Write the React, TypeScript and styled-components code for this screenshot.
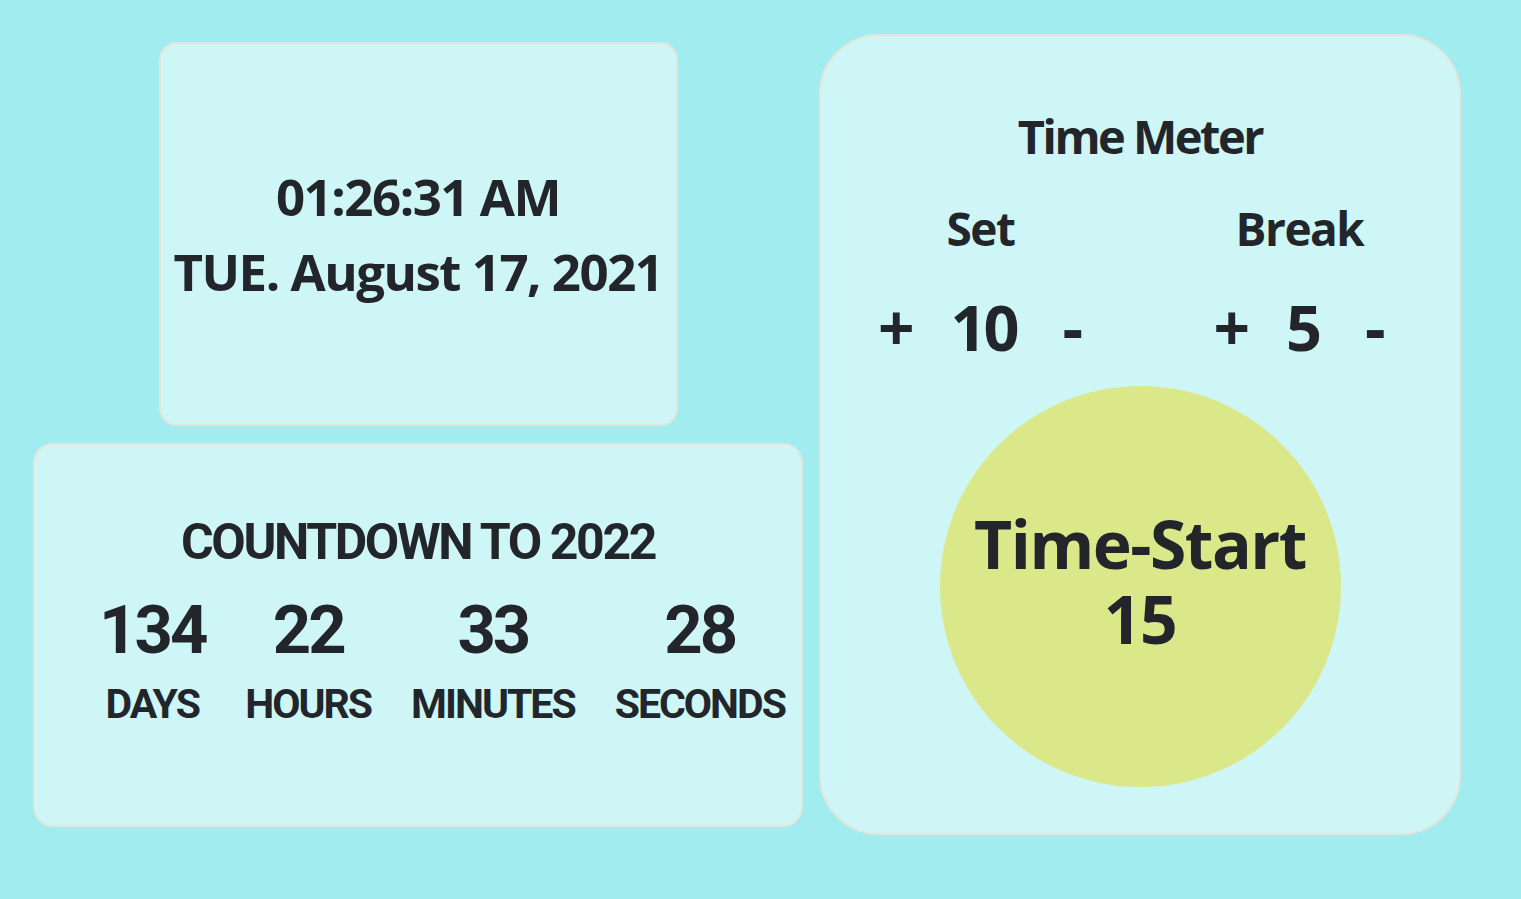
import React from "react";
import styled, { createGlobalStyle } from "styled-components";

const Global = createGlobalStyle`
  html, body { margin: 0; padding: 0; }
  body {
    background: #a0ecef;
    font-family: "Open Sans", "Noto Sans", sans-serif;
    color: #22262b;
    width: 1521px;
    height: 899px;
    overflow: hidden;
  }
`;

const Page = styled.div`
  display: flex;
  align-items: flex-start;
  gap: 16px;
  padding: 34px 0 0 33px;
`;

const LeftColumn = styled.div`
  display: flex;
  flex-direction: column;
  align-items: center;
  gap: 17px;
  width: 770px;
  margin-top: 8px;
`;

const Card = styled.div<{ $w: number; $h: number; $r: number }>`
  box-sizing: border-box;
  width: ${(p) => p.$w}px;
  height: ${(p) => p.$h}px;
  border-radius: ${(p) => p.$r}px;
  background: #cff6f6;
  border: 2px solid #e3e6db;
  display: flex;
  flex-direction: column;
  align-items: center;
`;

const ClockLine = styled.div<{ $mt: number }>`
  font-size: 51px;
  font-weight: 700;
  letter-spacing: -1.5px;
  line-height: 1;
  white-space: nowrap;
  margin-top: ${(p) => p.$mt}px;
`;

const Condensed = styled.div`
  font-family: Roboto, "Liberation Sans", sans-serif;
  font-weight: 700;
  line-height: 1;
  white-space: nowrap;
`;

const CountTitle = styled(Condensed)`
  font-size: 50px;
  letter-spacing: -2.4px;
  margin-top: 72px;
`;

const CountRow = styled.div`
  display: flex;
  gap: 40px;
  align-self: flex-start;
  margin-top: 30px;
  padding-left: 64px;
`;

const CountCol = styled.div`
  display: flex;
  flex-direction: column;
  align-items: center;
`;

const CountNum = styled(Condensed)`
  font-size: 67px;
  letter-spacing: -3px;
`;

const CountLabel = styled(Condensed)`
  font-size: 41px;
  letter-spacing: -2px;
  margin-top: 20px;
`;

const MeterTitle = styled.div`
  font-size: 47px;
  font-weight: 700;
  letter-spacing: -2.5px;
  line-height: 1;
  margin-top: 77px;
`;

const MeterRow = styled.div`
  display: flex;
  width: 100%;
`;

const MeterCol = styled.div`
  display: flex;
  flex-direction: column;
  align-items: center;
  width: 320px;
`;

const MeterLabel = styled.div`
  font-size: 46px;
  font-weight: 700;
  letter-spacing: -1.5px;
  line-height: 1;
  margin-top: 45px;
`;

const Controls = styled.div`
  display: flex;
  align-items: baseline;
  margin-top: 44px;
  gap: 40px;
  line-height: 1;
`;

const Sign = styled.span`
  font-size: 64px;
  font-weight: 700;
`;

const Value = styled.span`
  font-size: 63px;
  font-weight: 700;
  letter-spacing: -3px;
  margin: 0 6px 0 -4px;
`;

const StartCircle = styled.div`
  width: 401px;
  height: 401px;
  border-radius: 50%;
  background: #dbe88a;
  display: flex;
  flex-direction: column;
  align-items: center;
  justify-content: center;
  margin-top: 27px;
  padding-bottom: 11px;
  box-sizing: border-box;
`;

const StartText = styled.div`
  font-size: 66px;
  font-weight: 700;
  letter-spacing: -1.5px;
  line-height: 75px;
  text-align: center;
  white-space: nowrap;
`;

const countdown = [
  { n: "134", l: "DAYS" },
  { n: "22", l: "HOURS" },
  { n: "33", l: "MINUTES" },
  { n: "28", l: "SECONDS" },
];

const meters = [
  { l: "Set", v: "10" },
  { l: "Break", v: "5" },
];

export default function App() {
  return (
    <>
      <Global />
      <Page>
        <LeftColumn>
          <Card $w={519} $h={384} $r={18}>
            <ClockLine $mt={127}>01:26:31 AM</ClockLine>
            <ClockLine $mt={24}>TUE. August 17, 2021</ClockLine>
          </Card>
          <Card $w={770} $h={384} $r={20}>
            <CountTitle>COUNTDOWN TO 2022</CountTitle>
            <CountRow>
              {countdown.map((c) => (
                <CountCol key={c.l}>
                  <CountNum>{c.n}</CountNum>
                  <CountLabel>{c.l}</CountLabel>
                </CountCol>
              ))}
            </CountRow>
          </Card>
        </LeftColumn>
        <Card $w={642} $h={801} $r={60}>
          <MeterTitle>Time Meter</MeterTitle>
          <MeterRow>
            {meters.map((m) => (
              <MeterCol key={m.l}>
                <MeterLabel>{m.l}</MeterLabel>
                <Controls>
                  <Sign>+</Sign>
                  <Value>{m.v}</Value>
                  <Sign>-</Sign>
                </Controls>
              </MeterCol>
            ))}
          </MeterRow>
          <StartCircle>
            <StartText>
              Time-Start
              <br />
              15
            </StartText>
          </StartCircle>
        </Card>
      </Page>
    </>
  );
}
